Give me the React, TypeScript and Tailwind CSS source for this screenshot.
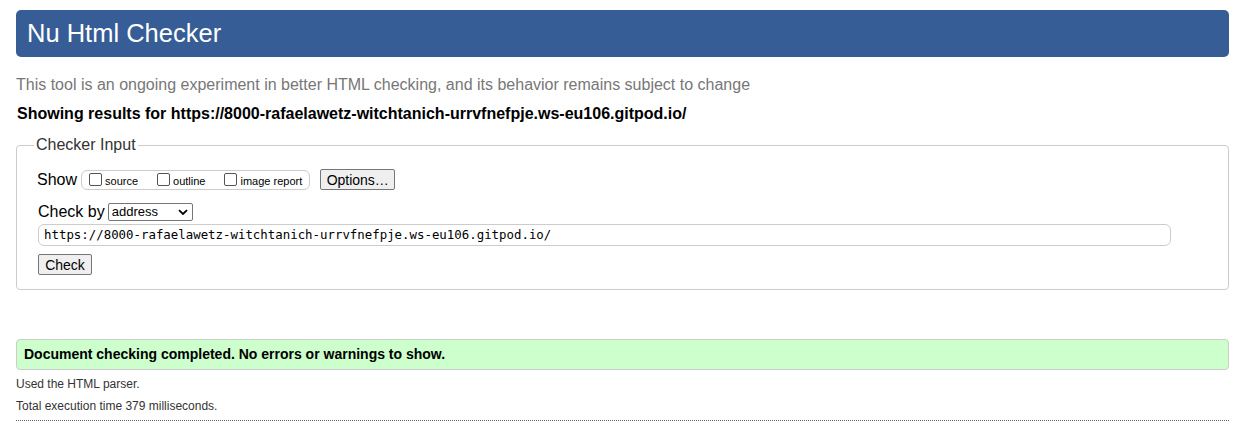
import React from "react";

const url = "https://8000-rafaelawetz-witchtanich-urrvfnefpje.ws-eu106.gitpod.io/";

const Checkbox: React.FC<{ label: string }> = ({ label }) => (
    <label className="flex items-center gap-[3px] mr-[19px] last:mr-0">
        <span className="w-[13px] h-[13px] border border-[#555] rounded-[2px] bg-white" />
        <span className="text-[11px] leading-[14px] text-black mt-[2px]">{label}</span>
    </label>
);

const App: React.FC = () => {
    return (
        <div className="min-h-[441px] bg-white pt-[10px] pl-[16px] pr-[10px] font-['Liberation_Sans',Arial,sans-serif] text-black">
            {/* header */}
            <h1 className="h-[47px] flex items-center px-[11px] rounded-[5px] bg-[#365d95] text-white text-[25.5px]">
                Nu Html Checker
            </h1>

            <p className="mt-[18px] text-[16px] leading-[20px] text-[#777]">
                This tool is an ongoing experiment in better HTML checking, and its behavior remains subject to change
            </p>
            <p className="mt-[9px] pl-[1px] text-[16px] leading-[20px] font-bold">
                Showing results for {url}
            </p>

            {/* checker input */}
            <fieldset className="mt-[12px] border border-[#ccc] rounded-[4px] pl-[21px] pr-[57px] pb-[14px]">
                <legend className="ml-[-4px] px-[2px] text-[16px] leading-[18px] text-[#333]">Checker Input</legend>

                <div className="flex items-center mt-[15px] h-[21px]">
                    <span className="text-[16px] leading-[18px] mr-[4px] -ml-[1px]">Show</span>
                    <div className="flex items-center h-[20px] border border-[#ccc] rounded-[6px] pl-[7px] pr-[7px]">
                        <Checkbox label="source" />
                        <Checkbox label="outline" />
                        <Checkbox label="image report" />
                    </div>
                    <button className="ml-[10px] h-[21px] w-[75px] border border-[#767676] rounded-[2px] bg-[#efefef] text-[14px] leading-[16px]">
                        Options…
                    </button>
                </div>

                <div className="flex items-center mt-[13px] h-[18px]">
                    <span className="text-[16px] leading-[18px] mr-[3px]">Check by</span>
                    <div className="relative w-[85px] h-[18px] border border-[#767676] rounded-[2px] bg-white">
                        <span className="absolute left-[3px] top-[0px] text-[13px] leading-[16px]">address</span>
                        <svg className="absolute right-[4px] top-[5px]" width="10" height="7" viewBox="0 0 10 7">
                            <path d="M1 1.2 L5 5 L9 1.2" fill="none" stroke="#000" strokeWidth="1.8" />
                        </svg>
                    </div>
                </div>

                <div className="mt-[3px] h-[22px] flex items-center border border-[#ccc] rounded-[6px] px-[5px] font-['DejaVu_Sans_Mono',monospace] text-[12.4px]">
                    {url}
                </div>

                <button className="block mt-[8px] h-[21px] w-[54px] border border-[#767676] rounded-[2px] bg-[#efefef] text-[14px] leading-[16px]">
                    Check
                </button>
            </fieldset>

            {/* result */}
            <div className="mt-[49px] h-[31px] flex items-center px-[7px] border border-[#ccc] rounded-[4px] bg-[#ccffcc] text-[14px] font-bold">
                Document checking completed. No errors or warnings to show.
            </div>
            <p className="mt-[3px] text-[12px] leading-[22px] text-[#333]">Used the HTML parser.</p>
            <p className="text-[12px] leading-[22px] text-[#333]">Total execution time 379 milliseconds.</p>
            <div className="mt-[3px] border-t border-dotted border-[#666]" />
        </div>
    );
};

export default App;
